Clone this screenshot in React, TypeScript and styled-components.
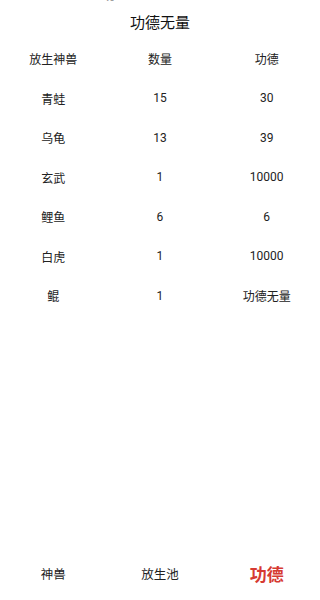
import React from "react";
import styled, { createGlobalStyle } from "styled-components";

const Global = createGlobalStyle`
  html, body { margin: 0; padding: 0; background: #ffffff; }
  body { font-family: Roboto, "Noto Sans CJK SC", sans-serif; color: #222; }
`;

const Page = styled.div`
  display: flex;
  flex-direction: column;
  height: 600px;
  overflow: hidden;
`;

const Ghost = styled.div`
  height: 3px;
  overflow: hidden;
  padding-left: 103px;
`;

const GhostText = styled.span`
  display: block;
  margin-top: -10px;
  font-size: 12px;
  line-height: 13px;
  color: #888;
`;

const Title = styled.h1`
  margin: 0;
  height: 36px;
  display: flex;
  align-items: center;
  justify-content: center;
  font-size: 15px;
  font-weight: 400;
  color: #111;
`;

const Table = styled.div`
  display: flex;
  flex-direction: column;
`;

const Row = styled.div`
  display: grid;
  grid-template-columns: 1fr 1fr 1fr;
  height: 39.5px;
  align-items: center;
`;

const Cell = styled.div`
  text-align: center;
  font-size: 12px;
  color: #222;
`;

const Spacer = styled.div`
  flex: 1;
`;

const Nav = styled.nav`
  display: grid;
  grid-template-columns: 1fr 1fr 1fr;
  height: 54px;
  align-items: center;
`;

const NavItem = styled.div<{ $active?: boolean }>`
  text-align: center;
  font-size: ${(p) => (p.$active ? "17px" : "12.5px")};
  font-weight: ${(p) => (p.$active ? 700 : 400)};
  color: ${(p) => (p.$active ? "#d63a32" : "#222")};
`;

const rows: [string, string, string][] = [
  ["青蛙", "15", "30"],
  ["乌龟", "13", "39"],
  ["玄武", "1", "10000"],
  ["鲤鱼", "6", "6"],
  ["白虎", "1", "10000"],
  ["鲲", "1", "功德无量"],
];

export default function App() {
  return (
    <Page>
      <Global />
      <Ghost>
        <GhostText>功</GhostText>
      </Ghost>
      <Title>功德无量</Title>
      <Table>
        <Row>
          <Cell>放生神兽</Cell>
          <Cell>数量</Cell>
          <Cell>功德</Cell>
        </Row>
        {rows.map((r) => (
          <Row key={r[0]}>
            <Cell>{r[0]}</Cell>
            <Cell>{r[1]}</Cell>
            <Cell>{r[2]}</Cell>
          </Row>
        ))}
      </Table>
      <Spacer />
      <Nav>
        <NavItem>神兽</NavItem>
        <NavItem>放生池</NavItem>
        <NavItem $active>功德</NavItem>
      </Nav>
    </Page>
  );
}
